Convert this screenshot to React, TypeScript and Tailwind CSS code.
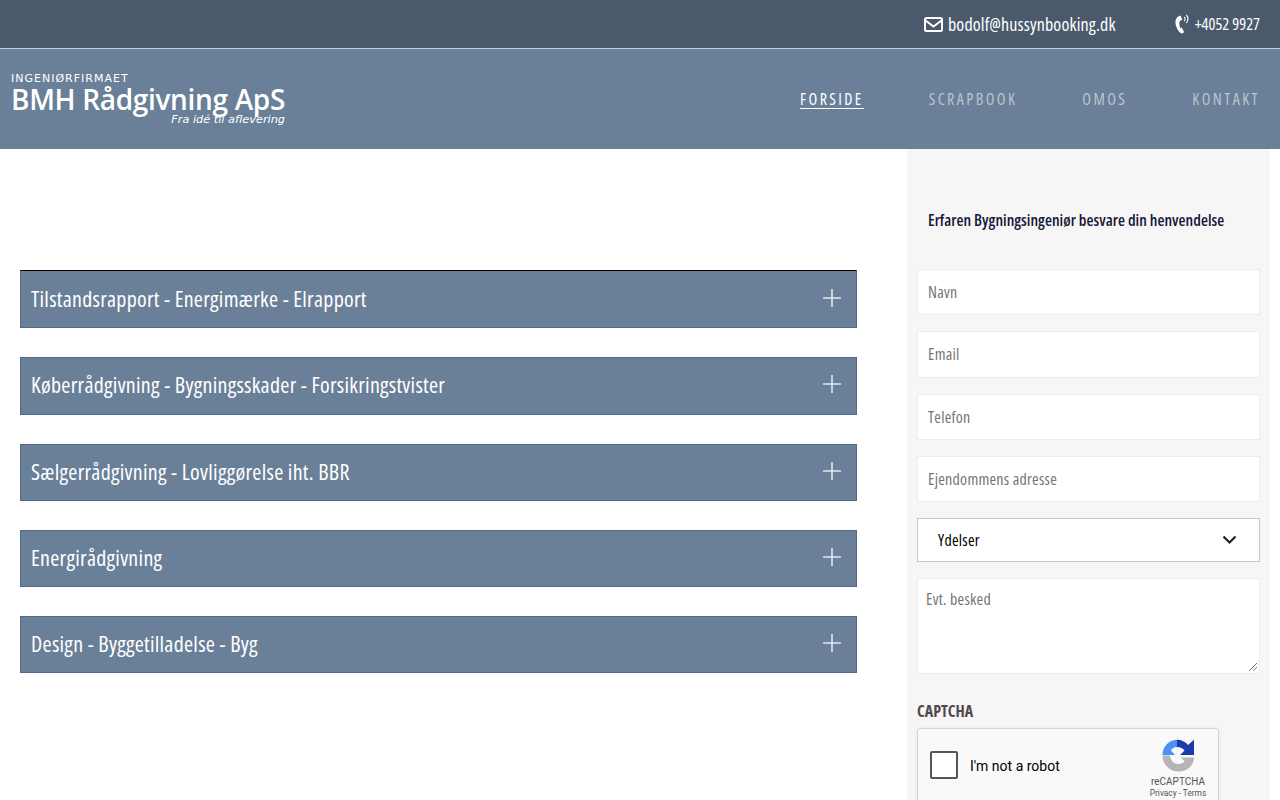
import React from "react";

const F = "font-['Open_Sans',sans-serif] font-stretch-[75%]";

function Plus() {
  return (
    <svg width="18" height="18" viewBox="0 0 18 18" className="mt-[2px] shrink-0">
      <path d="M9 0V18M0 9H18" stroke="#e3e8ee" strokeWidth="1.6" fill="none" />
    </svg>
  );
}

function Row({ title, first, h }: { title: string; first?: boolean; h: string }) {
  return (
    <div className={`flex ${h} items-start justify-between border border-[#4f6a8a] bg-[#6a7f98] pl-[10px] pr-[15px] ${first ? "border-t-black pt-[16px]" : "pt-[15px]"}`}>
      <span className="text-[22px] leading-none tracking-[0.27px] text-white">{title}</span>
      <Plus />
    </div>
  );
}

function Field({ ph }: { ph: string }) {
  return (
    <div className="flex h-[46.3px] items-center border border-[#ececec] bg-white px-[10px] text-[16px] tracking-[0.25px] text-[#757575]">{ph}</div>
  );
}

function RecaptchaLogo() {
  return (
    <svg width="33" height="33" viewBox="0 0 33 33">
      <path d="M15 0.8V8C12 8 10 9.500 9 11.500L13 16H0.500C0.500 8 6.500 1 15 0.800Z" fill="#4a90f5" />
      <path d="M15 0.800C19.500 0.800 23.500 2.800 26 6L32 0.800V16H18L22.500 11.500C21 9.300 18.500 8 15 8Z" fill="#1c3aa9" />
      <path d="M0.500 16.500H8C8.500 21.500 12 25 16.500 25C19 25 21 24 22.500 22.500L19 18.500H32C32 26 25.500 32.500 16.500 32.500C7.500 32.500 0.500 25.500 0.500 16.500Z" fill="#b5b5b5" />
    </svg>
  );
}

function MailIcon() {
  return (
    <svg width="19" height="15" viewBox="0 0 19 15" className="shrink-0">
      <rect x="1" y="1" width="17" height="13" rx="1.500" fill="none" stroke="#fff" strokeWidth="2" />
      <path d="M1.500 3.500L9.500 9.500L17.500 3.500" fill="none" stroke="#fff" strokeWidth="2" />
    </svg>
  );
}

function PhoneIcon() {
  return (
    <svg width="15" height="20" viewBox="0 0 15 20" className="shrink-0">
      <path d="M5.500 1.500L2.500 3C0 5 0 9.500 1.500 13C3 16.500 5 19.800 7.500 19.500L9 18L6.800 13.500L5.500 14.200C4.500 12.500 3.800 9 4.800 7L7.300 5.800Z" fill="#fff" />
      <path d="M9.300 3C10.300 4 10.300 6 9.300 7M11.300 1C13.500 3.200 13.500 6.800 11.300 9" fill="none" stroke="#fff" strokeWidth="1.100" />
    </svg>
  );
}

export default function App() {
  return (
    <div className={`h-[800px] overflow-hidden bg-white ${F}`}>
      <div className="flex h-[49px] items-center justify-end gap-[59px] border-b border-[#c9ced4] bg-[#4a5a6c] pr-[20px] text-[18px] leading-none tracking-[0.15px] text-white">
        <div className="flex items-center gap-[5px]">
          <MailIcon />
          <span>bodolf@hussynbooking.dk</span>
        </div>
        <div className="flex items-center gap-[5px]">
          <PhoneIcon />
          <span className="text-[16.3px] tracking-normal">+4052 9927</span>
        </div>
      </div>

      <header className="flex h-[100px] items-center justify-between bg-[#6a7f98] pl-[11px] pr-[20px]">
        <div className="flex w-[274px] flex-col font-stretch-[100%] text-white">
          <div className="pt-[1px] font-['DejaVu_Sans',sans-serif] text-[11px] leading-[11px] tracking-[1px]">INGENIØRFIRMAET</div>
          <div className="whitespace-nowrap pt-[1px] font-['Open_Sans',sans-serif] text-[28px] font-semibold leading-[28px] tracking-[-0.33px]">BMH Rådgivning ApS</div>
          <div className="text-right font-['DejaVu_Sans',sans-serif] text-[11.3px] italic leading-[13px]">Fra idé til aflevering</div>
        </div>
        <nav className="flex gap-[65px] text-[16px] tracking-[2.4px] text-[#bcc5cf]">
          <a className="border-b border-white pt-[2px] leading-[17px] text-white">FORSIDE</a>
          <a className="pt-[2px] leading-[17px]">SCRAPBOOK</a>
          <a className="pt-[2px] leading-[17px]">OMOS</a>
          <a className="pt-[2px] leading-[17px]">KONTAKT</a>
        </nav>
      </header>

      <main className="flex">
        <section className="w-[907px] pl-[20px] pr-[50px] pt-[121px]">
          <div className="flex flex-col gap-[29px]">
            <Row first h="h-[58px]" title="Tilstandsrapport - Energimærke - Elrapport" />
            <Row h="h-[58px]" title="Køberrådgivning - Bygningsskader - Forsikringstvister" />
            <Row h="h-[57px]" title="Sælgerrådgivning - Lovliggørelse iht. BBR" />
            <Row h="h-[57px]" title="Energirådgivning" />
            <Row h="h-[57px]" title="Design - Byggetilladelse - Byg" />
          </div>
        </section>

        <aside className="h-[651px] w-[363px] bg-[#f6f6f6] px-[10px]">
          <h2 className="flex h-[120px] items-center pl-[11px] pt-[22px] text-[16px] font-semibold tracking-[0.03px] text-[#17173a]">Erfaren Bygningsingeniør besvare din henvendelse</h2>
          <div className="flex flex-col gap-[16px]">
            <Field ph="Navn" />
            <Field ph="Email" />
            <Field ph="Telefon" />
            <Field ph="Ejendommens adresse" />
            <div className="flex h-[44px] items-center justify-between border border-[#c6c6c6] bg-white pl-[20px] pr-[22px] text-[16px] tracking-[0.25px] text-black">
              <span>Ydelser</span>
              <svg width="15" height="10" viewBox="0 0 15 10">
                <path d="M1.500 1.500L7.500 7.500L13.500 1.500" fill="none" stroke="#222" strokeWidth="2.200" />
              </svg>
            </div>
            <div className="relative h-[96px] border border-[#ececec] bg-white px-[8px] pt-[10px] text-[16px] leading-[20px] tracking-[0.25px] text-[#757575]">
              Evt. besked
              <svg width="10" height="10" viewBox="0 0 10 10" className="absolute bottom-[1px] right-[1px]">
                <path d="M9 1L1 9M9 5L5 9" stroke="#777" strokeWidth="1" fill="none" />
              </svg>
            </div>
          </div>
          <div className="mt-[26px] text-[16px] font-bold leading-[22px] text-[#54494a]">CAPTCHA</div>
          <div className="mt-[6px] flex h-[78px] w-[302px] rounded-[3px] border border-[#d3d3d3] bg-[#f9f9f9] font-['Roboto',sans-serif] font-stretch-[100%] shadow-[0_0_4px_rgba(0,0,0,0.08)]">
            <div className="ml-[12px] mt-[22px] h-[28px] w-[28px] rounded-[2px] border-2 border-[#555] bg-white" />
            <div className="ml-[12px] mt-[28px] h-fit text-[14px] leading-[18px] text-black">I'm not a robot</div>
            <div className="ml-auto mr-[10px] mt-[10px] flex w-[60px] flex-col items-center">
              <RecaptchaLogo />
              <div className="mt-[4px] text-[10px] leading-[12px] text-[#555]">reCAPTCHA</div>
              <div className="whitespace-nowrap text-[8.3px] leading-[10px] text-[#555]">Privacy - Terms</div>
            </div>
          </div>
        </aside>
      </main>
    </div>
  );
}
